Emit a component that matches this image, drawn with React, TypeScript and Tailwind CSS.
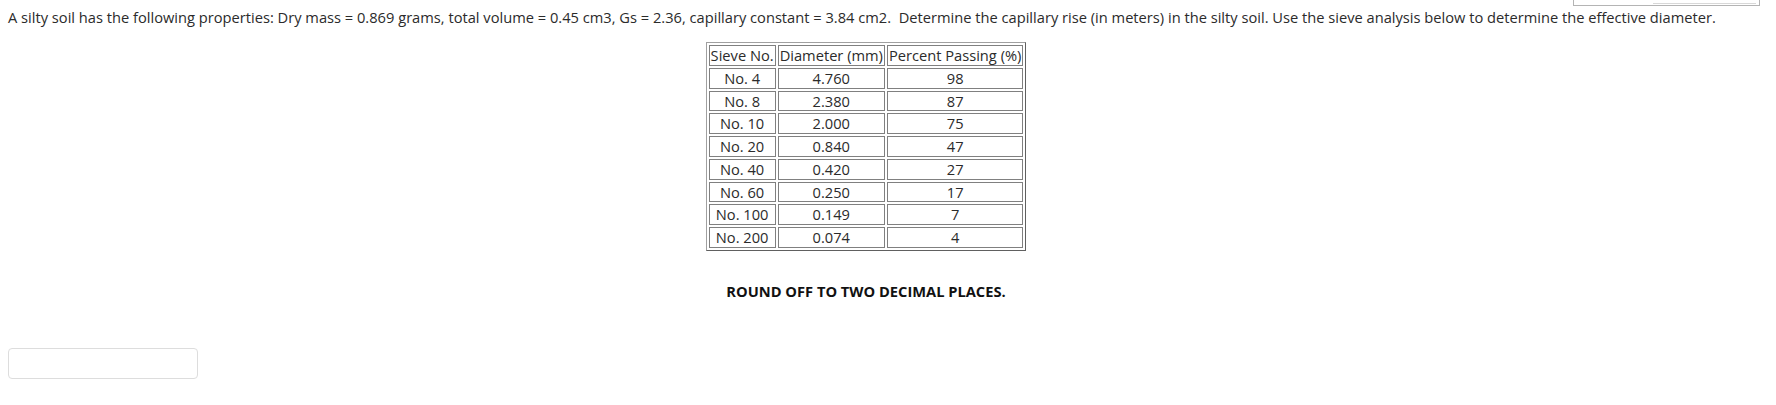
const rows: [string, string, string][] = [
  ['No. 4', '4.760', '98'],
  ['No. 8', '2.380', '87'],
  ['No. 10', '2.000', '75'],
  ['No. 20', '0.840', '47'],
  ['No. 40', '0.420', '27'],
  ['No. 60', '0.250', '17'],
  ['No. 100', '0.149', '7'],
  ['No. 200', '0.074', '4'],
]

const cell = 'border border-[#808080] px-[1px] py-0 text-center font-normal leading-[18.75px]'

export default function App() {
  return (
    <div className="relative h-[405px] w-[1776px] overflow-hidden bg-white font-['Open_Sans',sans-serif] text-[14.667px] text-[#2b2b2b]">
      {/* cut-off box at top right */}
      <div className="absolute top-[-30px] left-[1573px] h-[36px] w-[187px] border border-[#b4b4b4] bg-white">
        <div className="absolute right-[3px] bottom-[1px] h-[4px] w-[103px] border-b border-[#d8d8d8]" />
      </div>

      <div className="px-2 pt-[7px]">
        <p className="leading-[20px]">
          A silty soil has the following properties: Dry mass = 0.869 grams, total volume = 0.45 cm3, Gs = 2.36, capillary constant = 3.84 cm2.&nbsp; Determine the capillary rise (in meters) in the silty soil. Use the sieve analysis below to determine the effective diameter.
        </p>

        <div className="mt-[15px] flex w-[1716px] justify-center">
          <table className="border-separate border-spacing-[2px] border border-t-[#a0a0a0] border-r-[#606060] border-b-[#606060] border-l-[#a0a0a0]">
            <thead>
              <tr>
                <th className={cell}>Sieve No.</th>
                <th className={cell}>Diameter (mm)</th>
                <th className={cell}>Percent Passing (%)</th>
              </tr>
            </thead>
            <tbody>
              {rows.map(([s, d, p]) => (
                <tr key={s}>
                  <td className={cell}>{s}</td>
                  <td className={cell}>{d}</td>
                  <td className={cell}>{p}</td>
                </tr>
              ))}
            </tbody>
          </table>
        </div>

        <p className="mt-[30px] w-[1716px] text-center leading-[20px] font-bold text-[#111]">
          ROUND OFF TO TWO DECIMAL PLACES.
        </p>

        <div className="mt-[47px] h-[31px] w-[190px] rounded-[4px] border border-[#dddddd] bg-white" />
      </div>
    </div>
  )
}
